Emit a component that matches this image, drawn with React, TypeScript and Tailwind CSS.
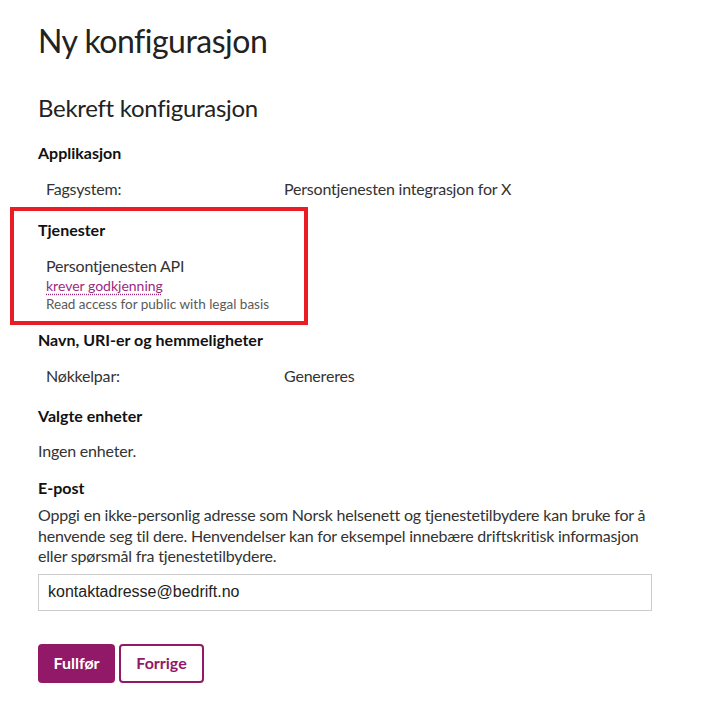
import React from 'react';

const rows = {
  app: [{ label: 'Fagsystem:', value: 'Persontjenesten integrasjon for X' }],
  keys: [{ label: 'Nøkkelpar:', value: 'Genereres' }],
};

const Row: React.FC<{ label: string; value: string }> = ({ label, value }) => (
  <div className="grid grid-cols-[238px_1fr] pl-2 text-[16px] leading-[24px] tracking-[-0.2px] text-[#333]">
    <span>{label}</span>
    <span>{value}</span>
  </div>
);

const Heading: React.FC<{ children: React.ReactNode; className?: string }> = ({ children, className }) => (
  <h3 className={`text-[16px] leading-[24px] font-bold text-[#111] ${className ?? ''}`}>{children}</h3>
);

export default function App() {
  return (
    <div className="min-h-[714px] bg-white px-[38px] pt-[21px] font-['Lato','Open_Sans',sans-serif] text-[#333]">
      <h1 className="text-[32px] leading-[40px] font-normal tracking-[-0.5px] text-[#222]">Ny konfigurasjon</h1>
      <h2 className="mt-[31px] text-[24px] leading-[32px] font-normal tracking-[-0.3px] text-[#222]">
        Bekreft konfigurasjon
      </h2>

      {/* Applikasjon */}
      <Heading className="mt-[17px]">Applikasjon</Heading>
      <div className="mt-[12px]">
        {rows.app.map((r) => (
          <Row key={r.label} {...r} />
        ))}
      </div>

      {/* Tjenester (highlighted) */}
      <div className="-ml-[28px] mt-[6px] w-[298px] border-4 border-[#ea1c26] pl-[24px] pt-[7px] pb-[8px]">
        <Heading>Tjenester</Heading>
        <div className="mt-[14px] pl-2">
          <div className="text-[16px] leading-[20px] tracking-[-0.2px] text-[#333]">Persontjenesten API</div>
          <div className="mt-[1px] text-[14px] leading-[18px]">
            <span className="text-[#9c2a80] underline decoration-dotted decoration-[#9c2a80] underline-offset-[3px]">
              krever godkjenning
            </span>
          </div>
          <div className="text-[13.5px] leading-[18px] text-[#5a5a5a]">Read access for public with legal basis</div>
        </div>
      </div>

      {/* Navn, URI-er og hemmeligheter */}
      <Heading className="mt-[3px]">Navn, URI-er og hemmeligheter</Heading>
      <div className="mt-[12px]">
        {rows.keys.map((r) => (
          <Row key={r.label} {...r} />
        ))}
      </div>

      {/* Valgte enheter */}
      <Heading className="mt-[16px]">Valgte enheter</Heading>
      <p className="mt-[11px] text-[16px] leading-[24px] tracking-[-0.2px] text-[#333]">Ingen enheter.</p>

      {/* E-post */}
      <Heading className="mt-[13px]">E-post</Heading>
      <p className="mt-[5px] w-[614px] whitespace-nowrap text-[16px] leading-[20.5px] tracking-[-0.2px] text-[#333]">
        Oppgi en ikke-personlig adresse som Norsk helsenett og tjenestetilbydere kan bruke for å
        <br />
        henvende seg til dere. Henvendelser kan for eksempel innebære driftskritisk informasjon
        <br />
        eller spørsmål fra tjenestetilbydere.
      </p>
      <input
        type="text"
        defaultValue="kontaktadresse@bedrift.no"
        className="mt-[7px] block h-[37px] w-[614px] border border-[#ccc] bg-white pl-[9px] font-['Liberation_Sans',Arial,sans-serif] text-[16px] text-[#222] outline-none"
      />

      <div className="mt-[33px] flex gap-[4px]">
        <button className="h-[39px] w-[77px] rounded-[4px] bg-[#921968] text-[16px] font-bold text-white">
          Fullfør
        </button>
        <button className="h-[39px] w-[85px] rounded-[4px] border-2 border-[#921968] bg-white text-[16px] font-bold text-[#921968]">
          Forrige
        </button>
      </div>
    </div>
  );
}
